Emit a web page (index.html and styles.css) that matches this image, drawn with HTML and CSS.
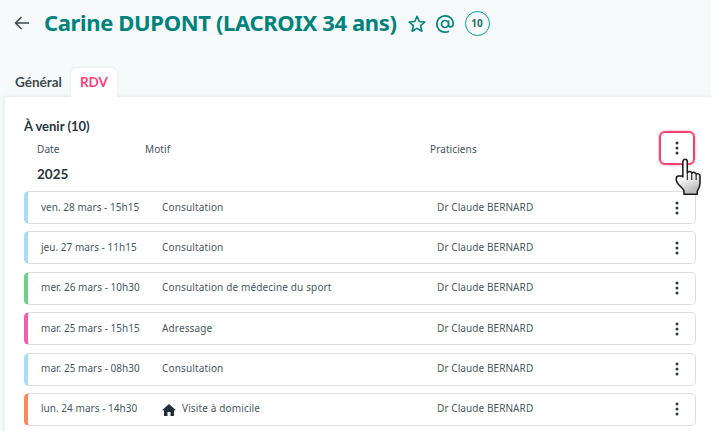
FILE: index.html
```html
<!DOCTYPE html>
<html lang="fr">
<head>
<meta charset="utf-8">
<title>Carine DUPONT</title>
<link rel="stylesheet" href="styles.css">
</head>
<body>
<header class="head">
  <svg class="back" width="16" height="14" viewBox="0 0 16 14"><path d="M15 7H1.500M7.500 1L1.500 7l6 6" fill="none" stroke="#3a4750" stroke-width="1.500"/></svg>
  <h1 class="name">Carine DUPONT (LACROIX 34 ans)</h1>
  <svg class="star" width="20" height="20" viewBox="0 0 20 20"><path d="M10 2.300l2.300 5.200 5.600.5-4.300 3.700 1.300 5.500L10 14.400l-4.900 2.800 1.300-5.500L2.100 8l5.600-.5z" fill="none" stroke="#00827c" stroke-width="1.600" stroke-linejoin="round"/></svg>
  <svg class="at" width="20" height="20" viewBox="0 0 20 20"><path d="M13.500 10a3.500 3.500 0 1 1-7 0 3.500 3.500 0 0 1 7 0zm0-3.600V11c0 2.600 4.700 2.800 4.700-1.300C18.200 5 14.500 1.800 10 1.800a8.200 8.200 0 0 0 0 16.400c1.500 0 2.800-.3 4-1" fill="none" stroke="#00827c" stroke-width="1.700"/></svg>
  <span class="count">10</span>
</header>
<nav class="tabs">
  <span class="tab">Général</span>
  <span class="tab active">RDV</span>
</nav>
<main class="panel">
  <h2 class="section">À venir (10)</h2>
  <div class="cols">
    <span class="col-date">Date</span>
    <span class="col-motif">Motif</span>
    <span class="col-prat">Praticiens</span>
    <span class="menu-focus"><svg width="4" height="14" viewBox="0 0 4 14"><circle cx="2" cy="2" r="1.500"/><circle cx="2" cy="7" r="1.500"/><circle cx="2" cy="12" r="1.500"/></svg></span>
  </div>
  <div class="year">2025</div>
  <ul class="list">
    <li class="row blue"><span class="date">ven. 28 mars - 15h15</span><span class="motif">Consultation</span><span class="prat">Dr Claude BERNARD</span><svg class="dots" width="4" height="14" viewBox="0 0 4 14"><circle cx="2" cy="2" r="1.500"/><circle cx="2" cy="7" r="1.500"/><circle cx="2" cy="12" r="1.500"/></svg></li>
    <li class="row blue"><span class="date">jeu. 27 mars - 11h15</span><span class="motif">Consultation</span><span class="prat">Dr Claude BERNARD</span><svg class="dots" width="4" height="14" viewBox="0 0 4 14"><circle cx="2" cy="2" r="1.500"/><circle cx="2" cy="7" r="1.500"/><circle cx="2" cy="12" r="1.500"/></svg></li>
    <li class="row green"><span class="date">mer. 26 mars - 10h30</span><span class="motif">Consultation de médecine du sport</span><span class="prat">Dr Claude BERNARD</span><svg class="dots" width="4" height="14" viewBox="0 0 4 14"><circle cx="2" cy="2" r="1.500"/><circle cx="2" cy="7" r="1.500"/><circle cx="2" cy="12" r="1.500"/></svg></li>
    <li class="row pink"><span class="date">mar. 25 mars - 15h15</span><span class="motif">Adressage</span><span class="prat">Dr Claude BERNARD</span><svg class="dots" width="4" height="14" viewBox="0 0 4 14"><circle cx="2" cy="2" r="1.500"/><circle cx="2" cy="7" r="1.500"/><circle cx="2" cy="12" r="1.500"/></svg></li>
    <li class="row blue"><span class="date">mar. 25 mars - 08h30</span><span class="motif">Consultation</span><span class="prat">Dr Claude BERNARD</span><svg class="dots" width="4" height="14" viewBox="0 0 4 14"><circle cx="2" cy="2" r="1.500"/><circle cx="2" cy="7" r="1.500"/><circle cx="2" cy="12" r="1.500"/></svg></li>
    <li class="row orange"><span class="date">lun. 24 mars - 14h30</span><span class="motif"><svg class="home" width="14" height="12" viewBox="0 0 14 12"><path d="M7 0L0 6.200h2V12h3.500V8h3v4H12V6.200h2z" fill="#1f3038"/></svg>Visite à domicile</span><span class="prat">Dr Claude BERNARD</span><svg class="dots" width="4" height="14" viewBox="0 0 4 14"><circle cx="2" cy="2" r="1.500"/><circle cx="2" cy="7" r="1.500"/><circle cx="2" cy="12" r="1.500"/></svg></li>
  </ul>
</main>
<svg class="cursor" width="31" height="40" viewBox="0 0 28 38" preserveAspectRatio="none"><defs><linearGradient id="hand" x1="0" y1="0" x2="0.300" y2="1"><stop offset="0.550" stop-color="#fff"/><stop offset="1" stop-color="#bdbdbd"/></linearGradient></defs><path d="M8 3.500c0-3 4-3 4 0V14c1-2 4-1.500 4 .5 1-1.500 4-1 4 1 1-1 3.500-.5 3.500 1.500v7c0 3-1 5-2.500 7.500v3H9v-3.500C7 27 2 25 2 20.500c0-2 1-3.500 2-3.500h3c.5 0 1 .5 1 1z" fill="url(#hand)" stroke="#1a1a1a" stroke-width="1.400" stroke-linejoin="round"/><path d="M12 14v7M16 14.500V21M20 15.500V21" stroke="#1a1a1a" fill="none"/></svg>
</body>
</html>
```
FILE: styles.css
```css
* { box-sizing: border-box; }
html, body { margin: 0; height: 100%; overflow: hidden; }
body {
  width: 711px;
  height: 431px;
  background: #f5f9fa;
  font-family: "Noto Sans", sans-serif;
  color: #2f3e46;
  position: relative;
}
.head {
  height: 68px;
  padding: 8px 0 0 14px;
  display: flex;
  align-items: flex-start;
}
.back { margin-top: 8px; }
.name {
  margin: 0 0 0 14px;
  font-size: 22px;
  line-height: 29px;
  letter-spacing: -.36px;
  font-weight: 700;
  color: #00827c;
  white-space: nowrap;
}
.star { margin: 6px 0 0 10px; }
.at { margin: 6px 0 0 8px; }
.count {
  margin: 3px 0 0 10px;
  width: 25px;
  height: 25px;
  border: 1px solid #00a09a;
  border-radius: 50%;
  color: #1b6f6c;
  font-size: 10px;
  font-weight: 700;
  text-align: center;
  line-height: 23px;
}
.tabs { display: flex; height: 29px; padding-left: 5px; }
.tab {
  padding: 7px 9px 0 10px;
  font-family: Lato, sans-serif;
  font-size: 13.500px;
  line-height: 15px;
  font-weight: 700;
  color: #3b4a52;
}
.tab.active {
  width: 46px;
  background: #fff;
  color: #ff3d7f;
  border-radius: 6px 6px 0 0;
  box-shadow: 0 -1px 3px rgba(0,0,0,.06);
  text-align: center;
  padding: 7px 0 0;
  position: relative;
  z-index: 1;
}
.panel {
  margin-left: 5px;
  height: 340px;
  background: #fff;
  box-shadow: 0 0 4px rgba(0,0,0,.1);
  padding: 21px 15px 0 19px;
}
.section {
  margin: 0;
  font-family: Lato, sans-serif;
  font-size: 13px;
  line-height: 17px;
  font-weight: 700;
  color: #27363e;
}
.cols {
  display: flex;
  align-items: center;
  height: 26px;
  margin-top: 1px;
  padding-left: 13px;
  font-size: 10px;
  letter-spacing: .1px;
  color: #44525a;
  position: relative;
}
.col-date { width: 108px; }
.col-motif { width: 285px; }
.menu-focus {
  position: absolute;
  right: 1px;
  top: -5px;
  width: 36px;
  height: 34px;
  border: 2px solid #f4426f;
  border-radius: 6px;
  box-shadow: 0 0 3px rgba(244,66,111,.5);
  display: flex;
  align-items: center;
  justify-content: center;
  fill: #2b3940;
}
.year {
  padding-left: 13px;
  font-family: Lato, sans-serif;
  font-size: 13.500px;
  line-height: 16px;
  font-weight: 700;
  color: #27363e;
  margin-top: 4px;
  height: 25px;
}
.list { list-style: none; margin: 0; padding: 0; display: flex; flex-direction: column; gap: 7.400px; }
.row {
  height: 33px;
  display: flex;
  align-items: center;
  border: 1px solid #dcdfe1;
  border-left: 4px solid #a8dcf5;
  border-radius: 5px;
  font-size: 10px;
  color: #4a575e;
  padding-left: 13px;
}
.green { border-left-color: #6fcf8b; }
.pink { border-left-color: #ee5fb0; }
.orange { border-left-color: #f58a5c; }
.date { width: 121px; letter-spacing: .03px; padding-bottom: 2px; }
.motif { width: 275px; display: flex; align-items: center; letter-spacing: .14px; padding-bottom: 2px; }
.prat { flex: 1; letter-spacing: .08px; padding-bottom: 2px; }
.home { margin-right: 6px; margin-top: 3px; }
.dots { margin-right: 16px; fill: #2b3940; }
.cursor { position: absolute; left: 674px; top: 158px; }
```
